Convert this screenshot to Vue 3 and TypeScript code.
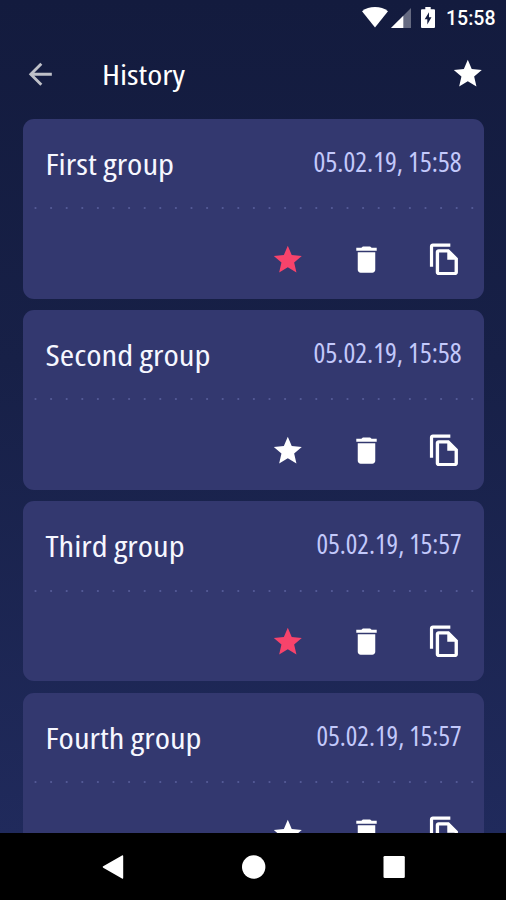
<script setup lang="ts">
interface Group {
  name: string
  nameWidth: number
  date: string
  dateWidth: number
  starred: boolean
}

const groups: Group[] = [
  { name: 'First group', nameWidth: 128.5, date: '05.02.19, 15:58', dateWidth: 148, starred: true },
  { name: 'Second group', nameWidth: 165, date: '05.02.19, 15:58', dateWidth: 148, starred: false },
  { name: 'Third group', nameWidth: 139, date: '05.02.19, 15:57', dateWidth: 145, starred: true },
  { name: 'Fourth group', nameWidth: 156, date: '05.02.19, 15:57', dateWidth: 145, starred: false },
]

const starPath = 'M12 17.27 18.18 21l-1.64-7.03L22 9.24l-7.19-.61L12 2 9.19 8.63 2 9.24l5.46 4.73L5.82 21z'
</script>

<template>
  <div class="screen">
    <div class="status">
      <svg class="wifi" viewBox="0 0 26 21"><path d="M0 4.2C3.6 1.4 8 0 13 0s9.400 1.400 13 4.200L13 20.500z" /></svg>
      <svg class="signal" viewBox="0 0 20 20">
        <path d="M0 20 20 0v20z" opacity=".35" />
        <path d="M0 20 12.300 7.700V20z" />
      </svg>
      <svg class="battery" viewBox="0 0 14 21">
        <path fill-rule="evenodd" d="M4.300 0h5.400v2.200H13q1 0 1 1V20q0 1-1 1H1q-1 0-1-1V3.200q0-1 1-1h3.300zM8 5.200 3.700 12.300h2.600v5.300l4.200-7.400H8z" />
      </svg>
      <svg class="clock" viewBox="0 0 50 30"><text x="0" y="25" textLength="49.500" lengthAdjust="spacingAndGlyphs">15:58</text></svg>
    </div>

    <header class="toolbar">
      <svg class="back" viewBox="0 0 24 24"><path d="M20 11H7.830l5.590-5.590L12 4l-8 8 8 8 1.410-1.410L7.830 13H20z" /></svg>
      <svg class="title" viewBox="0 0 100 40"><text x="0" y="30" textLength="83" lengthAdjust="spacingAndGlyphs">History</text></svg>
      <svg class="star" viewBox="0 0 24 24"><path :d="starPath" /></svg>
    </header>

    <main class="list">
      <article v-for="group in groups" :key="group.name" class="card">
        <div class="heading">
          <svg class="name" viewBox="0 0 180 50">
            <text x="0.500" y="34.700" :textLength="group.nameWidth" lengthAdjust="spacingAndGlyphs">{{ group.name }}</text>
          </svg>
          <svg class="date" viewBox="0 0 150 50">
            <text :x="149.6 - group.dateWidth" y="31.700" :textLength="group.dateWidth" lengthAdjust="spacingAndGlyphs">{{ group.date }}</text>
          </svg>
        </div>
        <svg class="divider" viewBox="0 0 440 4"><path d="M1.500 2H439" /></svg>
        <div class="actions">
          <svg class="star" :class="{ active: group.starred }" viewBox="0 0 24 24"><path :d="starPath" /></svg>
          <svg class="tool" viewBox="0 0 24 24"><path d="M6 19c0 1.100.9 2 2 2h8c1.100 0 2-.9 2-2V7H6zM19 4h-3.500l-1-1h-5l-1 1H5v2h14z" /></svg>
          <svg class="tool" viewBox="0 0 24 24">
            <path fill-rule="evenodd" d="M16 1H4C2.900 1 2 1.900 2 3v14h2.200V3.200H16zM15 4.900l6.200 6.200v9.600c0 1.100-.9 2-2 2H8c-1.100 0-2-.9-2-2V6.900c0-1.100.9-2 2-2zM8.300 7.200v13.300h10.600v-8.300h-5V7.200z" />
          </svg>
        </div>
      </article>
    </main>

    <nav class="navbar">
      <svg viewBox="0 0 24 24"><path d="M22.200 1.200v21.600q0 1.400-1.200.7L2.200 12.700q-1-.7 0-1.400L21 .5q1.200-.7 1.200.7z" /></svg>
      <svg viewBox="0 0 24 24"><circle cx="11.700" cy="12" r="11.700" /></svg>
      <svg viewBox="0 0 24 24"><rect x="1.500" y="1" width="21.300" height="22" rx="1.300" /></svg>
    </nav>
  </div>
</template>

<style>
body {
  margin: 0;
  background: #000;
}
</style>

<style scoped>
.screen {
  display: flex;
  flex-direction: column;
  width: 506px;
  height: 900px;
  overflow: hidden;
  color: #fff;
  background: linear-gradient(#131b3e, #172047 40%, #202a5c 93%);
  font-family: "Open Sans", "Noto Sans", sans-serif;
}

svg {
  display: block;
  flex: none;
  fill: currentColor;
}

.status {
  display: flex;
  align-items: flex-start;
  height: 36px;
  padding-left: 362px;
  box-sizing: border-box;
}

.wifi {
  width: 26px;
  height: 21px;
  margin-top: 6.500px;
}

.signal {
  width: 20px;
  height: 20px;
  margin: 7.500px 0 0 2.500px;
}

.battery {
  width: 14px;
  height: 21px;
  margin: 7px 0 0 10.500px;
}

.clock {
  width: 50px;
  height: 30px;
  margin-left: 10.500px;
  font: 500 19.800px Roboto, sans-serif;
}

.toolbar {
  display: flex;
  align-items: center;
  height: 76px;
  padding: 0 21.700px 0 22.500px;
  margin-bottom: 6.700px;
  box-sizing: border-box;
}

.back {
  width: 34.600px;
  height: 34.600px;
  color: #bfc1c8;
}

.title {
  width: 100px;
  height: 40px;
  margin: 0 auto 0 44.600px;
  padding-top: 2px;
  font-size: 27.300px;
  font-stretch: 80%;
  font-weight: 500;
}

.star {
  width: 33.600px;
  height: 33.600px;
}

.list {
  display: flex;
  flex-direction: column;
  gap: 11.300px;
  height: 714.600px;
  padding: 0 22px 0 23px;
  overflow: hidden;
}

.card {
  flex: none;
  height: 180px;
  border-radius: 11px;
  background: #33386f;
}

.heading {
  display: flex;
  justify-content: space-between;
  height: 87.400px;
  padding: 21px 22px 0;
  box-sizing: border-box;
}

.name {
  width: 180px;
  height: 50px;
  font-size: 28.500px;
  font-stretch: 80%;
  font-weight: 500;
  color: #f6f7ff;
}

.date {
  width: 150px;
  height: 50px;
  font-size: 26.500px;
  font-stretch: 80%;
  color: #c3c9fb;
}

.divider {
  width: 440px;
  height: 4px;
  margin-left: 11px;
  fill: none;
  stroke: #565c98;
  stroke-width: 2.200;
  stroke-linecap: round;
  stroke-dasharray: 0 15.600;
}

.actions {
  display: flex;
  align-items: center;
  justify-content: flex-end;
  gap: 43.500px;
  height: 98px;
  padding-right: 21.700px;
}

.actions .star {
  margin: 1px 1.100px 0 0;
}

.active {
  color: #f7436b;
}

.tool {
  width: 35px;
  height: 35px;
}

.navbar {
  display: flex;
  align-items: center;
  justify-content: center;
  gap: 116.600px;
  flex: 1;
  padding-left: 1px;
  background: #000;
}

.navbar svg {
  width: 24px;
  height: 24px;
}
</style>
